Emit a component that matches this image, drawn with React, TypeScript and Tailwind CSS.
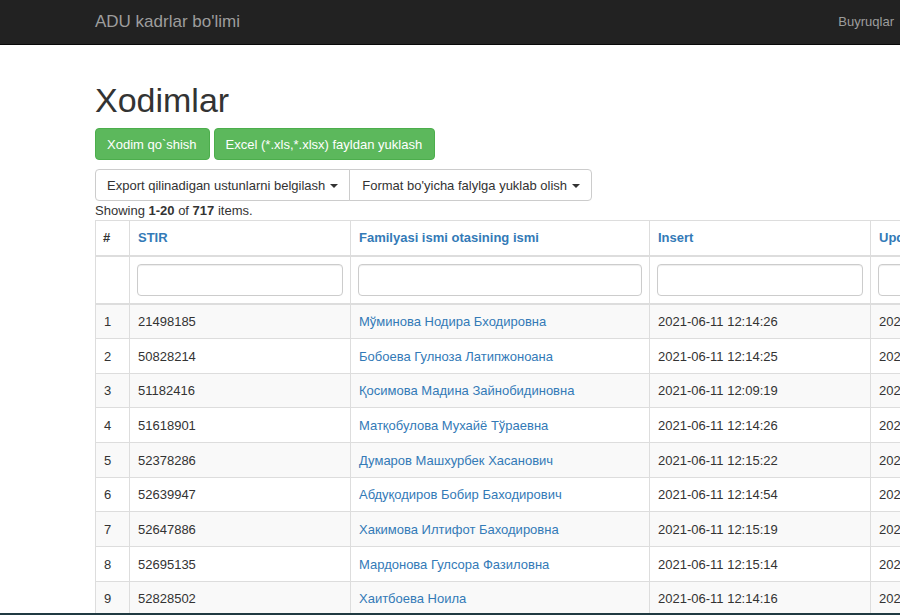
import React from "react";

const rows = [
  ["21498185", "Мўминова Нодира Бходировна", "2021-06-11 12:14:26"],
  ["50828214", "Бобоева Гулноза Латипжоноана", "2021-06-11 12:14:25"],
  ["51182416", "Қосимова Мадина Зайнобидиновна", "2021-06-11 12:09:19"],
  ["51618901", "Матқобулова Мухайё Тўраевна", "2021-06-11 12:14:26"],
  ["52378286", "Думаров Машхурбек Хасанович", "2021-06-11 12:15:22"],
  ["52639947", "Абдуқодиров Бобир Баходирович", "2021-06-11 12:14:54"],
  ["52647886", "Хакимова Илтифот Баходировна", "2021-06-11 12:15:19"],
  ["52695135", "Мардонова Гулсора Фазиловна", "2021-06-11 12:15:14"],
  ["52828502", "Хаитбоева Ноила", "2021-06-11 12:14:16"],
];

const columns = ["STIR", "Familyasi ismi otasining ismi", "Insert", "Update"];

function Caret() {
  return (
    <span className="ml-[5px] inline-block border-x-4 border-t-4 border-x-transparent border-t-current align-middle" />
  );
}

export default function App() {
  return (
    <div className="h-screen overflow-hidden border-b-2 border-[#203a42] bg-white font-['Liberation_Sans',Arial,sans-serif] text-[13px] leading-[19px] text-[#333]">
      <nav className="flex h-[45px] items-center justify-between border-b border-[#080808] bg-[#222] pr-1.5 pl-[95px] text-[#9d9d9d]">
        <a href="#" className="pb-0.5 text-[17px]">ADU kadrlar bo'limi</a>
        <a href="#" className="pb-0.5">Buyruqlar</a>
      </nav>
      <main className="pt-9 pl-[95px]">
        <h1 className="text-[34px] leading-[38px]">Xodimlar</h1>
        <div className="mt-[9px] flex gap-1 text-white">
          <button className="h-8 rounded-[4px] border border-[#4cae4c] bg-[#5cb85c] pr-3 pl-[11px]">Xodim qo`shish</button>
          <button className="h-8 rounded-[4px] border border-[#4cae4c] bg-[#5cb85c] pr-3 pl-[11px]">Excel (*.xls,*.xlsx) fayldan yuklash</button>
        </div>
        <div className="mt-[9px] flex">
          <button className="h-8 rounded-l-[4px] border border-[#ccc] px-[11px]">
            Export qilinadigan ustunlarni belgilash<Caret />
          </button>
          <button className="-ml-px h-8 rounded-r-[4px] border border-[#ccc] pr-[11px] pl-3">
            Format bo'yicha falylga yuklab olish<Caret />
          </button>
        </div>
        <p>Showing <b>1-20</b> of <b>717</b> items.</p>
        <table className="w-[1126px] table-fixed border-collapse border border-[#ddd] text-left">
          <colgroup>
            <col className="w-[34px]" />
            <col className="w-[221px]" />
            <col className="w-[299px]" />
            <col className="w-[221px]" />
            <col />
          </colgroup>
          <thead>
            <tr className="h-[35px]">
              <th className="border border-b-2 border-[#ddd] px-[7px]">#</th>
              {columns.map((c) => (
                <th key={c} className="border border-b-2 border-[#ddd] px-2 text-[#337ab7]">
                  <a href="#">{c}</a>
                </th>
              ))}
            </tr>
            <tr className="h-12">
              <td className="border border-b-2 border-[#ddd]" />
              {columns.map((c) => (
                <td key={c} className="border border-b-2 border-[#ddd] px-[7px]">
                  <input aria-label={c} className="block h-8 w-full rounded-[4px] border border-[#ccc] bg-white px-3 shadow-[inset_0_1px_1px_rgba(0,0,0,0.075)]" />
                </td>
              ))}
            </tr>
          </thead>
          <tbody>
            {rows.map(([id, name, date], i) => (
              <tr key={id} className="h-[35px] odd:bg-[#f9f9f9] nth-[3n]:h-[34px]">
                <td className="border border-[#ddd] px-2">{i + 1}</td>
                <td className="border border-[#ddd] px-2">{id}</td>
                <td className="border border-[#ddd] px-2 text-[#337ab7]"><a href="#">{name}</a></td>
                <td className="border border-[#ddd] px-2">{date}</td>
                <td className="border border-[#ddd] px-2">{date}</td>
              </tr>
            ))}
          </tbody>
        </table>
      </main>
    </div>
  );
}
